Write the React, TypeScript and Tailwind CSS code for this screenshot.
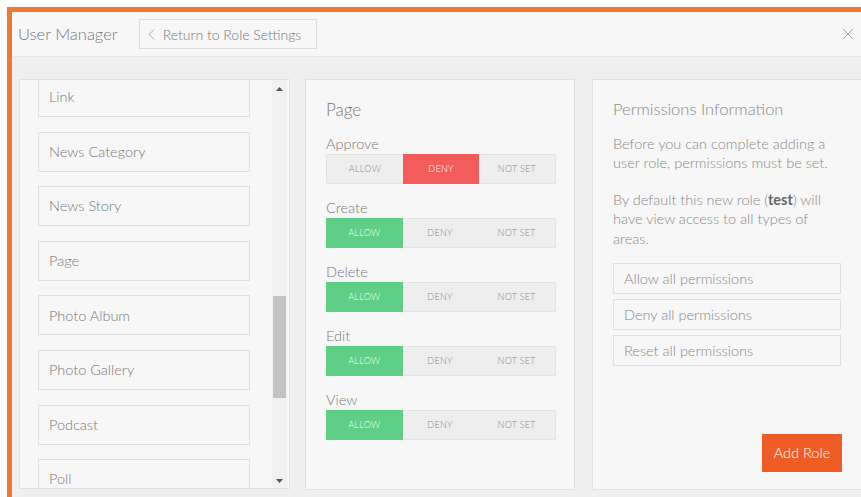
import { ChevronLeft, X } from "lucide-react";

type Choice = "allow" | "deny" | "unset";

const areas = [
  "Link",
  "News Category",
  "News Story",
  "Page",
  "Photo Album",
  "Photo Gallery",
  "Podcast",
  "Poll",
];

const perms: { name: string; value: Choice }[] = [
  { name: "Approve", value: "deny" },
  { name: "Create", value: "allow" },
  { name: "Delete", value: "allow" },
  { name: "Edit", value: "allow" },
  { name: "View", value: "allow" },
];

function Segment({ value }: { value: Choice }) {
  const opts: { key: Choice; label: string }[] = [
    { key: "allow", label: "Allow" },
    { key: "deny", label: "Deny" },
    { key: "unset", label: "Not set" },
  ];
  return (
    <div className="flex h-[30px] w-[230px] border border-[#e3e3e3] bg-[#eeeeee]">
      {opts.map((o) => {
        let tone = "text-[#8a8a8a]";
        if (o.key === value && value === "allow") tone = "bg-[#5fcf86] text-white -m-px";
        if (o.key === value && value === "deny") tone = "bg-[#f45c5c] text-white -my-px";
        return (
          <div
            key={o.key}
            className={`flex flex-1 items-center justify-center text-[9px] uppercase tracking-[0.3px] ${tone}`}
          >
            {o.label}
          </div>
        );
      })}
    </div>
  );
}

export default function App() {
  return (
    <div
      className="h-[497px] w-[861px] overflow-hidden bg-white pl-[7px] pt-[7px] font-light"
      style={{ fontFamily: "Lato, 'Open Sans', sans-serif" }}
    >
      <div className="flex h-full flex-col border-l-[5px] border-t-[5px] border-[#f0782f]">
        {/* Header */}
        <div className="flex h-[45px] shrink-0 items-center border-b border-[#e6e6e6] bg-[#f7f7f7] pl-[6px] pr-[4px]">
          <span className="text-[16.5px] text-[#777]">User Manager</span>
          <button className="ml-[21px] flex h-[30px] w-[178px] items-center gap-[2px] border border-[#dedede] bg-[#f7f7f7] pl-[2px] text-[14px] font-light text-[#777]">
            <ChevronLeft size={19} strokeWidth={1} className="text-[#999]" />
            Return to Role Settings
          </button>
          <X size={18} strokeWidth={1.2} className="ml-auto text-[#999]" />
        </div>

        {/* Body */}
        <div className="flex flex-1 bg-[#efefef] pl-[7px] pt-[22px]">
          {/* Area list */}
          <div className="flex h-[410px] w-[271px] shrink-0 overflow-hidden border border-[#e2e2e2] bg-[#f7f7f7]">
            <div className="flex-1 overflow-hidden pl-[18px]">
              <div className="-mt-[3px] flex flex-col gap-[14.6px]">
                {areas.map((a) => (
                  <div
                    key={a}
                    className="flex h-[40px] w-[212px] shrink-0 items-center border border-[#e0e0e0] bg-[#f7f7f7] pl-[10px] text-[14.5px] text-[#777]"
                  >
                    {a}
                  </div>
                ))}
              </div>
            </div>
            {/* scrollbar */}
            <div className="relative mr-[2px] w-[15px] bg-[#f1f1f1]">
              <svg width="7" height="4" className="absolute left-[4px] top-[7px]">
                <path d="M0 4 L3.5 0 L7 4 Z" fill="#555" />
              </svg>
              <div className="absolute left-[1px] right-[1px] top-[216px] h-[102px] bg-[#c3c3c3]" />
              <svg width="7" height="4" className="absolute bottom-[5px] left-[4px]">
                <path d="M0 0 L3.5 4 L7 0 Z" fill="#555" />
              </svg>
            </div>
          </div>

          {/* Permission matrix */}
          <div className="ml-[15px] flex h-[411px] w-[270px] shrink-0 flex-col border border-[#e2e2e2] bg-[#f7f7f7] pl-[20px] pt-[17px]">
            <div className="text-[17px] text-[#777]">Page</div>
            <div className="mt-[11px] flex flex-col gap-[14px]">
              {perms.map((p) => (
                <div key={p.name}>
                  <div className="h-[20px] text-[14.5px] leading-[20px] text-[#777]">{p.name}</div>
                  <Segment value={p.value} />
                </div>
              ))}
            </div>
          </div>

          {/* Info */}
          <div className="ml-[17px] flex h-[411px] w-[270px] shrink-0 flex-col border border-[#e2e2e2] bg-[#f7f7f7] pl-[20px] pr-[18px] pt-[17px]">
            <div className="text-[16.5px] text-[#888]">Permissions Information</div>
            <p className="mt-[12px] text-[14.5px] leading-[19.5px] text-[#888]">
              Before you can complete adding a user role, permissions must be set.
            </p>
            <p className="mt-[17px] text-[14.5px] leading-[19.5px] text-[#888]">
              By default this new role (<b className="font-bold text-[#666]">test</b>) will have view access to all types of areas.
            </p>
            <div className="mt-[15px] flex flex-col gap-[5px]">
              {["Allow all permissions", "Deny all permissions", "Reset all permissions"].map((t) => (
                <div
                  key={t}
                  className="flex h-[31px] w-[228px] items-center border border-[#e0e0e0] bg-[#f7f7f7] pl-[10px] text-[14.5px] text-[#888]"
                >
                  {t}
                </div>
              ))}
            </div>
            <div className="mb-[17px] mt-auto flex w-[229px] justify-end">
              <button className="h-[38px] w-[80px] bg-[#ef5d26] text-[14.5px] font-light text-white">Add Role</button>
            </div>
          </div>
        </div>
      </div>
    </div>
  );
}
